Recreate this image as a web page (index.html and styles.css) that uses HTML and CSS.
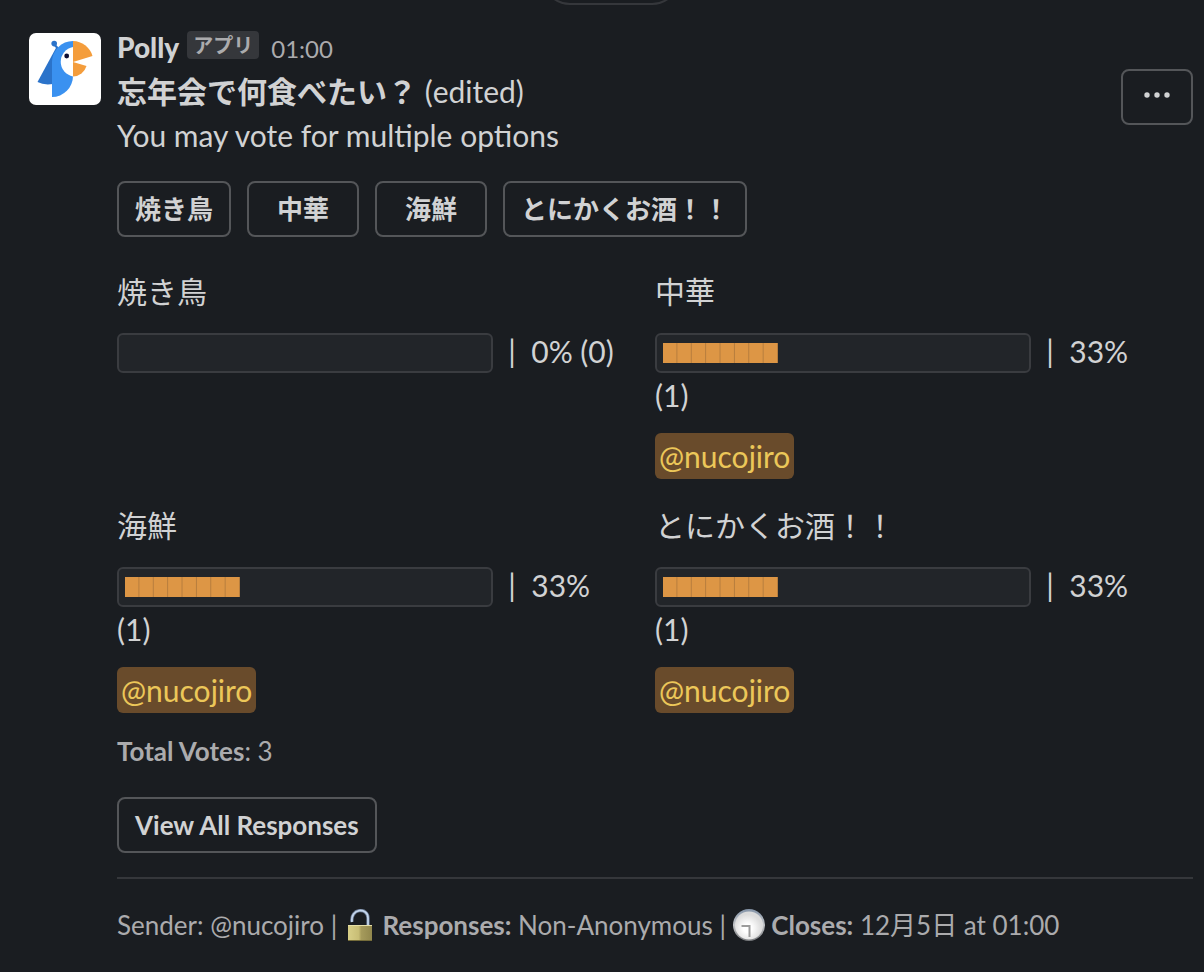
FILE: index.html
```html
<!DOCTYPE html>
<html lang="ja">
<head>
  <meta charset="UTF-8" />
  <meta name="viewport" content="width=device-width, initial-scale=1.0"/>
  <title>Polly</title>
  <link rel="stylesheet" href="styles.css">
</head>
<body>
<div class="day-divider"><div class="day-pill"></div></div>
<div class="message">
  <svg class="avatar" viewBox="0 0 72 72" aria-hidden="true">
    <rect width="72" height="72" rx="7" fill="#fff"/>
    <path d="M28 13 L8.500 49 Q15 52.500 24 51 L32 22 Z" fill="#2b73ca"/>
    <path d="M25 11 L30 17" stroke="#2b73ca" stroke-width="2"/>
    <circle cx="25.200" cy="10.600" r="2.800" fill="#2b73ca"/>
    <path d="M44 8 A21 21 0 0 0 23 29 V64 A21 21 0 0 0 44 43 Z" fill="#3a91f0"/>
    <path d="M44 14 A15 15 0 0 0 44 43.500 Z" fill="#fff"/>
    <path d="M44 8 A21 21 0 0 1 63.500 23 L44 29 Z" fill="#f49d3c"/>
    <path d="M44 29 L57.500 33 A14.500 14.500 0 0 1 44 43.500 Z" fill="#f49d3c"/>
    <circle cx="37.700" cy="23" r="2.400" fill="#0b0d35"/>
  </svg>
  <div class="content">
    <div class="header">
      <span class="sender">Polly</span>
      <span class="badge">アプリ</span>
      <span class="time">01:00</span>
    </div>
    <div class="question">
      <div class="question-text">
        <div><b>忘年会で何食べたい？</b> (edited)</div>
        <div>You may vote for multiple options</div>
      </div>
      <button class="btn more" aria-label="More">
        <svg width="26" height="6" viewBox="0 0 26 6" fill="currentColor">
          <circle cx="3" cy="3" r="2.700"/><circle cx="13" cy="3" r="2.700"/><circle cx="23" cy="3" r="2.700"/>
        </svg>
      </button>
    </div>
    <div class="options">
      <button class="btn">焼き鳥</button>
      <button class="btn">中華</button>
      <button class="btn">海鮮</button>
      <button class="btn">とにかくお酒！！</button>
    </div>
    <div class="results">
      <div class="result">
        <div class="label">焼き鳥</div>
        <div><span class="bar"></span>&nbsp; | &nbsp;0% (0)</div>
      </div>
      <div class="result">
        <div class="label">中華</div>
        <div><span class="bar"><span class="fill" style="width: 32%"></span></span>&nbsp; | &nbsp;33% (1)</div>
        <a class="mention" href="#">@nucojiro</a>
      </div>
      <div class="result">
        <div class="label">海鮮</div>
        <div><span class="bar"><span class="fill" style="width: 32%"></span></span>&nbsp; | &nbsp;33% (1)</div>
        <a class="mention" href="#">@nucojiro</a>
      </div>
      <div class="result">
        <div class="label">とにかくお酒！！</div>
        <div><span class="bar"><span class="fill" style="width: 32%"></span></span>&nbsp; | &nbsp;33% (1)</div>
        <a class="mention" href="#">@nucojiro</a>
      </div>
    </div>
    <div class="context"><b>Total Votes</b>: 3</div>
    <button class="btn view-all">View All Responses</button>
    <hr>
    <div class="context">
      Sender: @nucojiro |
      <svg class="emoji" viewBox="0 0 32 32" aria-hidden="true">
        <defs>
          <linearGradient id="brass">
            <stop offset="0" stop-color="#d8cf88"/>
            <stop offset=".45" stop-color="#c8bd75"/>
            <stop offset=".55" stop-color="#a69b5c"/>
            <stop offset="1" stop-color="#91874d"/>
          </linearGradient>
        </defs>
        <path d="M8 13 C6 -1 24 -2 24 9 V17" fill="none" stroke="#66758d" stroke-width="3.400"/>
        <path d="M8 13 C6 -1 24 -2 24 9 V17" fill="none" stroke="#c3d5ec" stroke-width="1.800"/>
        <rect x="4" y="16" width="24" height="16" fill="url(#brass)"/>
        <path d="M4 16.500 H28" stroke="#e6dfa8"/>
        <path d="M4 31.500 H28" stroke="#756c3a"/>
      </svg>
      <b>Responses:</b> Non-Anonymous |
      <svg class="emoji" viewBox="0 0 32 32" aria-hidden="true">
        <defs>
          <linearGradient id="rim" x1="0" y1="0" x2="0" y2="1">
            <stop offset="0" stop-color="#8494a8"/>
            <stop offset=".5" stop-color="#c5c7ca"/>
            <stop offset="1" stop-color="#77797c"/>
          </linearGradient>
          <radialGradient id="face" cx=".45" cy=".6">
            <stop offset=".3" stop-color="#fff"/>
            <stop offset="1" stop-color="#dcdcdc"/>
          </radialGradient>
        </defs>
        <circle cx="16" cy="16" r="16" fill="url(#rim)"/>
        <circle cx="16" cy="16.500" r="14" fill="url(#face)"/>
        <path d="M8.500 17 H16.500 V28" fill="none" stroke="#9c9c9c" stroke-width="2"/>
      </svg>
      <b>Closes:</b> 12月5日 at 01:00
    </div>
  </div>
</div>
</body>
</html>
```
FILE: styles.css
```css
* {
  box-sizing: border-box;
}

body {
  margin: 0;
  background: #1a1d21;
  color: #d1d2d3;
  font-family: Lato, 'Noto Sans CJK JP', sans-serif;
  font-size: 30px;
  line-height: 44px;
}

/* date pill cut off by the top of the scroll area */
.day-divider {
  display: flex;
  justify-content: center;
  align-items: flex-end;
  height: 5px;
  margin: 0 11px 0 29px;
  overflow: hidden;
}
.day-pill {
  flex-shrink: 0;
  width: 138px;
  height: 56px;
  border: 2px solid #35373b;
  border-radius: 28px;
}

.message {
  display: flex;
  gap: 16px;
  padding: 20px 11px 24px 29px;
}
.avatar {
  flex-shrink: 0;
  width: 72px;
  height: 72px;
  margin-top: 8px;
}
.content {
  flex: 1;
  min-width: 0;
}

.header {
  display: flex;
  align-items: baseline;
  height: 44px;
}
.sender {
  font-size: 28px;
  font-weight: 900;
}
.badge {
  align-self: center;
  margin: 0 12px 4px 8px;
  padding: 0 6px;
  border-radius: 4px;
  background: #35373b;
  color: #ababad;
  font-size: 20px;
  font-weight: 700;
  line-height: 28px;
}
.time {
  color: #ababad;
  font-size: 24px;
}

.question {
  display: flex;
  justify-content: space-between;
  gap: 16px;
}
.btn {
  min-width: 112px;
  height: 56px;
  padding: 0 16px;
  border: 2px solid #545659;
  border-radius: 8px;
  background: none;
  color: #d1d2d3;
  font-family: inherit;
  font-size: 26px;
  font-weight: 700;
  line-height: 48px;
  cursor: pointer;
}
.btn:hover {
  background: #222529;
}
.more {
  display: flex;
  flex-shrink: 0;
  align-items: center;
  justify-content: center;
  min-width: 72px;
  padding-bottom: 4px;
}
.options {
  display: flex;
  flex-wrap: wrap;
  gap: 16px;
  margin-top: 24px;
}

.results {
  display: grid;
  grid-template-columns: 1fr 1fr;
  row-gap: 24px;
  margin-top: 32px;
}
.result {
  padding-right: 32px;
}
.label {
  height: 44px;
  margin-bottom: 16px;
}
.bar {
  display: inline-flex;
  align-items: center;
  width: 376px;
  height: 40px;
  margin-top: 4px;
  padding: 0 6px;
  border: 2px solid #3a3c40;
  border-radius: 6px;
  background: #222529;
  vertical-align: top;
}
.fill {
  height: 20px;
  background: linear-gradient(90deg, #dd9645 93%, #b57c3d 93%) 0 0 / 12.5% 100%;
}
.mention {
  display: block;
  width: fit-content;
  margin-top: 16px;
  padding: 0 4px;
  border-radius: 6px;
  background: #694b2b;
  color: #ecc759;
  line-height: 46px;
  text-decoration: none;
}

.context {
  color: #ababad;
  font-size: 26px;
}
.results + .context {
  margin-top: 16px;
}
.view-all {
  display: block;
  margin-top: 24px;
}
hr {
  height: 2px;
  margin: 24px 0;
  border: none;
  background: #35373b;
}
.emoji {
  width: 32px;
  height: 32px;
  margin-bottom: 6px;
  vertical-align: middle;
}
```
